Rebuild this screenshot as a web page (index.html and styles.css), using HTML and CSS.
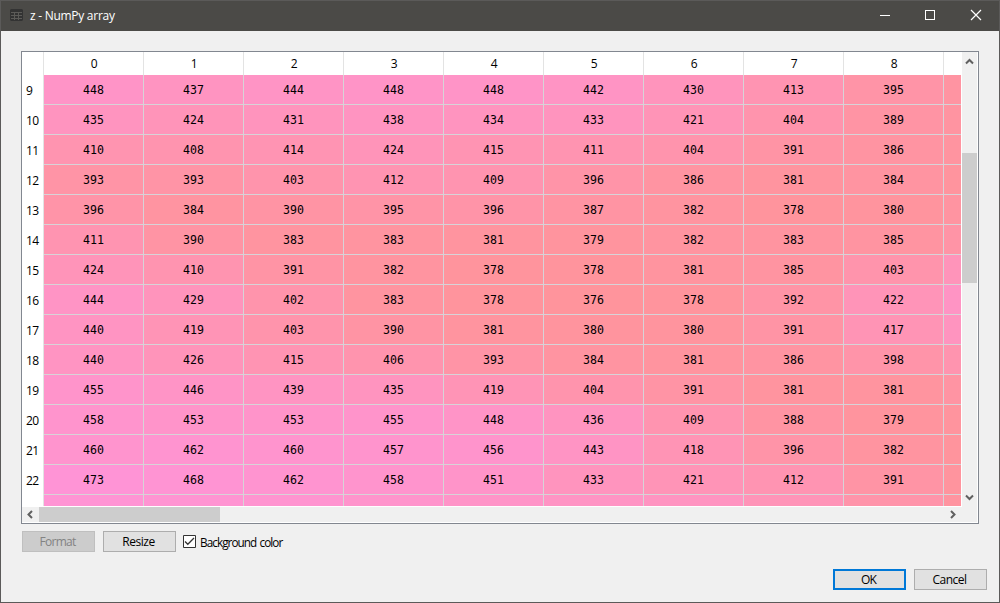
FILE: index.html
```html
<!DOCTYPE html>
<html lang="en"><head><meta charset="utf-8"><title>z - NumPy array</title>
<link rel="stylesheet" href="styles.css"></head>
<body>
<div class="window">
<header class="titlebar">
<svg class="app-icon" width="13" height="12" viewBox="0 0 13 12"><path fill="#333" d="M1 0h11l1 1v10l-1 1H1l-1-1V1z"/><path stroke="#5c5b58" d="M1 3.500h11M1 6.500h11M1 9.500h11M4.500 3v8M8.500 3v8"/></svg>
<span class="title">z - NumPy array</span>
<svg class="controls" width="106" height="12" viewBox="0 0 106 12" fill="none" stroke="#fff"><path shape-rendering="crispEdges" d="M0 6.500h10M45.500 1.500h9v9h-9z"/><path stroke-width="1.200" d="M91 1l10 10M101 1L91 11"/></svg>
</header>
<main class="content">
<div class="table-frame">
<div class="viewport"><div class="grid" id="grid"></div></div>
<div class="vbar"><svg width="16" height="20" viewBox="0 0 16 20"><path d="M4 11.500L7.500 8L11 11.500"/></svg><div class="vtrack"><div class="vthumb"></div></div><svg width="16" height="17" viewBox="0 0 16 17"><path d="M4 5.500L7.500 9L11 5.500"/></svg></div>
<div class="hbar"><svg width="17" height="15" viewBox="0 0 17 15"><path d="M10 4L6.500 7.500L10 11"/></svg><div class="htrack"><div class="hthumb"></div></div><svg width="17" height="15" viewBox="0 0 17 15"><path d="M6 4L9.500 7.500L6 11"/></svg></div>
<div class="corner"></div>
</div>
<div class="options">
<button class="button disabled" disabled><span class="format-text">Format</span></button><button class="button"><span class="resize-text">Resize</span></button>
<label class="check"><svg width="13" height="13" viewBox="0 0 13 13"><path fill="#fff" stroke="#333" d="M.5.5h12v12H.5z"/><path fill="none" stroke="#333" stroke-width="1.300" d="M2 6.500L4.800 9.300L11 3"/></svg><span class="check-text">Background color</span></label>
</div>
<div class="actions"><button class="button primary"><span class="ok-text">OK</span></button><button class="button"><span class="cancel-text">Cancel</span></button></div>
</main>
</div>
<script src="table.js"></script>
</body></html>
```
FILE: styles.css
```css
* { box-sizing: border-box; }
body { margin: 0; font: 12px "Open Sans", sans-serif; color: #000; }
.window { width: 1000px; height: 603px; border: 1px solid #5b5a59; background: #f0f0f0; overflow: hidden; }
.titlebar { height: 30px; background: #4b4a47; color: #fff; display: flex; align-items: center; padding: 0 13px 0 9px; }
.app-icon { margin: 0 7px 2px 0; }
.title { font-size: 12px; letter-spacing: -.27px; padding-bottom: 1px; }
.controls { margin: 0 0 2px auto; }
.content { padding: 20px 12px 0 20px; }
.table-frame { width: 958px; height: 473px; border: 1px solid #828790; background: #fff; display: grid; grid-template-columns: 940px 16px; grid-template-rows: 455px 16px; }
.viewport { width: 939px; height: 454px; overflow: hidden; }
.grid { display: grid; grid-template-columns: 22px repeat(10, 100px); grid-template-rows: 23px; grid-auto-rows: 30px; width: 1022px; }
.head, .row-head { display: flex; align-items: center; letter-spacing: -.5px; font-size: 12px; }
.head { justify-content: center; border-right: 1px solid #e3e3e3; padding: 0 0 1px 1px; }
.row-head { padding: 1px 0 0 4px; border-right: 1px solid #e3e3e3; }
.cell { display: flex; align-items: center; justify-content: center; border-right: 1px solid #d8d2d7; border-bottom: 1px solid #d8d2d7; font: 11.6px "DejaVu Sans Mono", monospace; }
.vbar { display: flex; flex-direction: column; background: #f0f0f0; width: 15px; }
.vtrack { flex: 1; padding-top: 81px; }
.vthumb { height: 130px; background: #cdcdcd; }
.hbar { display: flex; height: 15px; background: #f0f0f0; }
.htrack { flex: 1; }
.hthumb { width: 181px; height: 15px; background: #cdcdcd; }
.vbar path, .hbar path { fill: none; stroke: #606060; stroke-width: 2; }
.corner { width: 15px; height: 15px; background: #f0f0f0; }
.options { display: flex; padding: 7px 0 0 1px; }
.button { width: 73px; height: 21px; margin: 0 8px 0 0; padding: 0 2px 0 0; background: #e1e1e1; border: 1px solid #adadad; font: 12px "Open Sans", sans-serif; color: #000; line-height: 19px; white-space: nowrap; }
.disabled { background: #ccc; border-color: #bfbfbf; color: #838383; }
.check { display: flex; align-items: center; margin-left: -1px; height: 21px; }
.check-text { margin-left: 4px; font-size: 11.7px; white-space: nowrap; letter-spacing: -.91px; word-spacing: 1px; }
.format-text, .cancel-text { letter-spacing: -.55px; }
.format-text { letter-spacing: -.75px; }
.resize-text { letter-spacing: -.5px; }
.ok-text { letter-spacing: -.8px; }
.actions { display: flex; justify-content: flex-end; margin-top: 17px; }
.actions .button:last-child { margin-right: 0; }
.primary { border: 2px solid #0078d7; line-height: 17px; }
```
FILE: table.js
```js
const rows = [
  [448,437,444,448,448,442,430,413,395,386],
  [435,424,431,438,434,433,421,404,389,384],
  [410,408,414,424,415,411,404,391,386,383],
  [393,393,403,412,409,396,386,381,384,380],
  [396,384,390,395,396,387,382,378,380,384],
  [411,390,383,383,381,379,382,383,385,393],
  [424,410,391,382,378,378,381,385,403,426],
  [444,429,402,383,378,376,378,392,422,443],
  [440,419,403,390,381,380,380,391,417,435],
  [440,426,415,406,393,384,381,386,398,408],
  [455,446,439,435,419,404,391,381,381,388],
  [458,453,453,455,448,436,409,388,379,380],
  [460,462,460,457,456,443,418,396,382,378],
  [473,468,462,458,451,433,421,412,391,380],
  [470,466,462,456,450,442,438,422,400,382]
];
const grid = document.getElementById('grid');
function add(name, text) {
  const el = document.createElement('div');
  el.className = name;
  el.textContent = text;
  grid.append(el);
  return el;
}
add('row-head', '');
for (let c = 0; c < 10; c++) add('head', c < 9 ? c : '');
rows.forEach((row, r) => {
  add('row-head', r < 14 ? r + 9 : '');
  row.forEach((value, c) => {
    const blue = Math.round(156 + (value - 376) * 0.6);
    add('cell', r < 14 && c < 9 ? value : '').style.backgroundColor = `rgb(255,148,${blue})`;
  });
});
```
